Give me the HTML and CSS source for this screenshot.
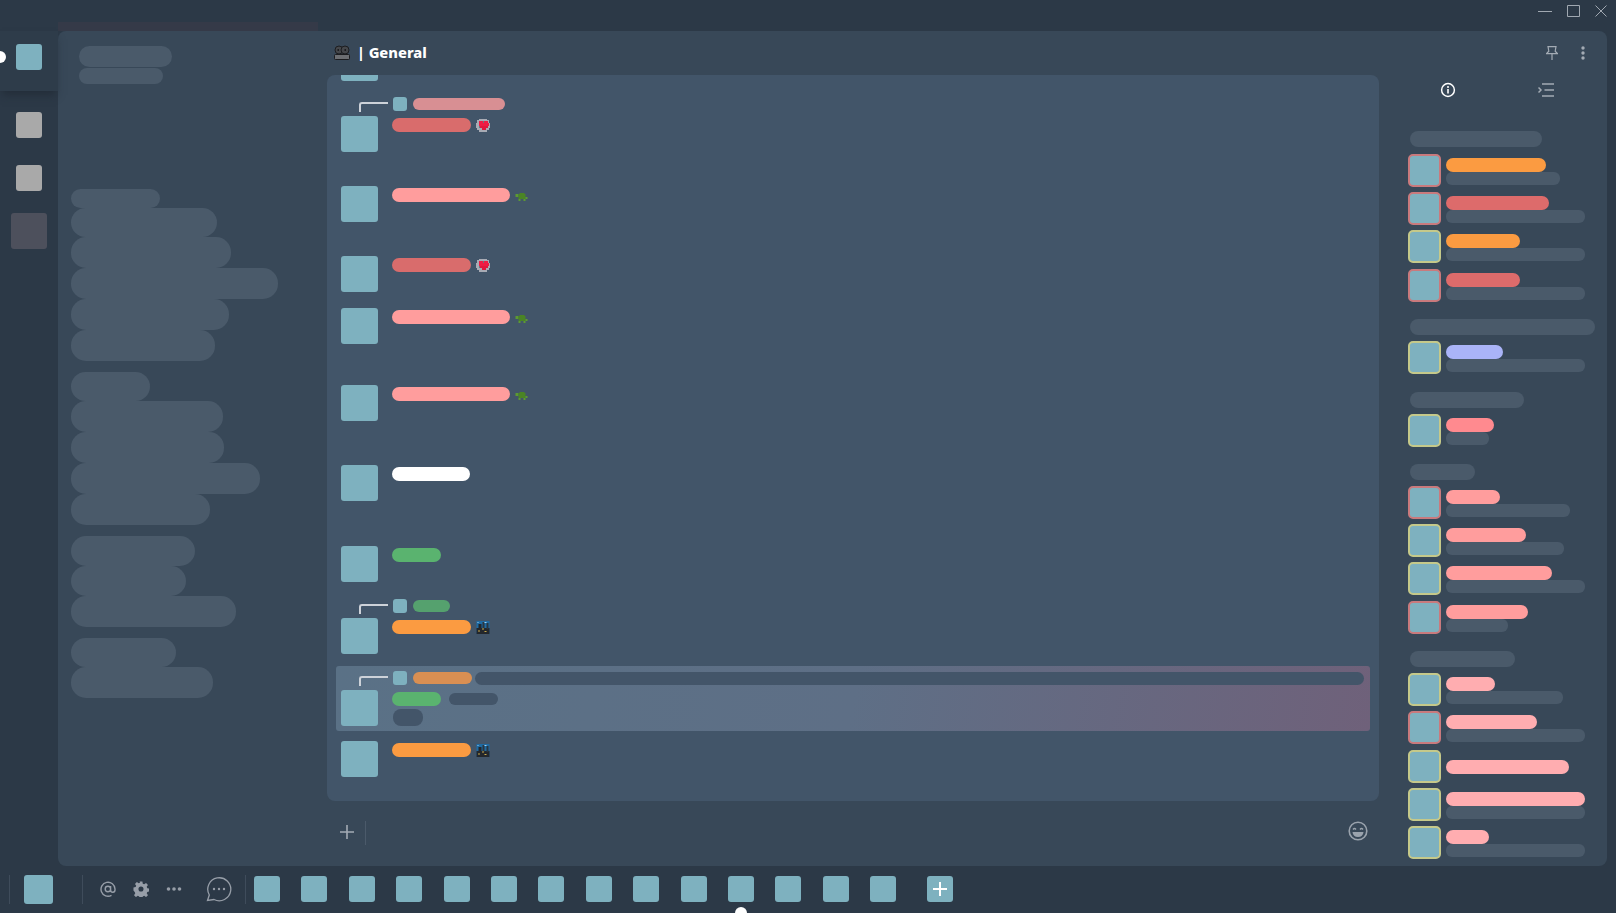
FILE: index.html
```html
<!DOCTYPE html>
<html lang="en">

<head>
  <meta charset="UTF-8">
  <title>General</title>
  <link rel="stylesheet" href="styles.css">
</head>

<body>
  <!-- little emoji used next to names -->
  <svg class="defs" width="0" height="0">
    <symbol id="heart" viewBox="0 0 14 13">
      <path d="M3 0h8v1h2v3h1v5h-1v2h-2v2H3v-2H1V9H0V4h1V1h2z" fill="#a8abb4" />
      <rect x="3" y="2" width="9" height="7" fill="#6f7480" />
      <rect x="3" y="2" width="4" height="2" fill="#ee1c45" />
      <rect x="8" y="2" width="4" height="2" fill="#ee1c45" />
      <rect x="3" y="4" width="10" height="3" fill="#ee1c45" />
      <rect x="4" y="7" width="8" height="2" fill="#e0183e" />
      <rect x="6" y="9" width="4" height="2" fill="#e0183e" />
    </symbol>
    <symbol id="turtle" viewBox="0 0 13 13">
      <rect x="0" y="5" width="3" height="3" fill="#5c9a32" />
      <rect x="3" y="5" width="7" height="5" fill="#4a8425" />
      <rect x="4" y="4" width="5" height="1" fill="#4a8425" />
      <rect x="10" y="8" width="2" height="2" fill="#5c9a32" />
      <rect x="3" y="10" width="2" height="2" fill="#5c9a32" />
      <rect x="8" y="10" width="2" height="2" fill="#5c9a32" />
    </symbol>
    <symbol id="city" viewBox="0 0 13 13">
      <rect x="0" y="0" width="13" height="13" fill="#1f6ba3" />
      <rect x="0" y="7" width="13" height="6" fill="#23272c" />
      <rect x="2" y="3" width="3" height="5" fill="#23272c" />
      <rect x="6" y="1" width="2" height="7" fill="#2b3640" />
      <rect x="10" y="2" width="2" height="6" fill="#2b3640" />
      <rect x="1" y="1" width="1" height="1" fill="#9fd0f0" />
      <rect x="8" y="1" width="2" height="1" fill="#9fd0f0" />
      <rect x="2" y="9" width="1" height="2" fill="#c9a94a" />
      <rect x="6" y="7" width="1" height="2" fill="#c9a94a" />
      <rect x="8" y="10" width="2" height="1" fill="#c9a94a" />
    </symbol>
  </svg>

  <div class="app">

    <div class="titlebar">
      <div class="strip"></div>
      <div class="winBtns">
        <svg width="14" height="12" viewBox="0 0 14 12"><path d="M0 6.5h14" /></svg>
        <svg width="13" height="12" viewBox="0 0 13 12"><path d="M.5.5h12v11H.5z" /></svg>
        <svg width="12" height="12" viewBox="0 0 12 12"><path d="M.5.5l11 11M11.5.5l-11 11" /></svg>
      </div>
    </div>

    <div class="rail">
      <div class="railTop">
        <span class="railPill"></span>
        <div class="railIcon teal"></div>
      </div>
      <div class="railIcon gray"></div>
      <div class="railIcon gray"></div>
      <div class="railActive"></div>
    </div>

    <div class="main">

      <div class="sidebar">
        <div class="sideHead">
          <div class="skel" style="width:93px;height:21px"></div>
          <div class="skel" style="width:84px;height:16px"></div>
        </div>
        <div class="chanGroup first">
          <div class="chan" style="width:89px;height:19px"></div>
          <div class="chan" style="width:146px;height:29px"></div>
          <div class="chan" style="width:160px;height:31px"></div>
          <div class="chan" style="width:207px;height:31px"></div>
          <div class="chan" style="width:158px;height:31px"></div>
          <div class="chan" style="width:144px;height:31px"></div>
        </div>
        <div class="chanGroup">
          <div class="chan" style="width:79px;height:29px"></div>
          <div class="chan" style="width:152px;height:31px"></div>
          <div class="chan" style="width:153px;height:31px"></div>
          <div class="chan" style="width:189px;height:31px"></div>
          <div class="chan" style="width:139px;height:31px"></div>
        </div>
        <div class="chanGroup">
          <div class="chan" style="width:124px;height:30px"></div>
          <div class="chan" style="width:115px;height:30px"></div>
          <div class="chan" style="width:165px;height:31px"></div>
        </div>
        <div class="chanGroup">
          <div class="chan" style="width:105px;height:29px"></div>
          <div class="chan" style="width:142px;height:31px"></div>
        </div>
      </div>

      <div class="center">
        <div class="chatHead">
          <svg class="headIcon" width="16" height="15" viewBox="0 0 16 15">
            <rect x=".5" y="9.500" width="15" height="5" rx="1" fill="#6c6e72" stroke="#1c1d20" />
            <circle cx="5" cy="5" r="4" fill="#45474b" stroke="#1c1d20" />
            <circle cx="11" cy="5" r="4" fill="#45474b" stroke="#1c1d20" />
            <rect x="3.500" y="4" width="1.500" height="2" fill="#1c1d20" />
            <rect x="10.500" y="4" width="1.500" height="2" fill="#1c1d20" />
          </svg>
          <span class="chatTitle">| General</span>
        </div>

        <div class="chat">
          <div class="stub"></div>

          <div class="msg m16">
            <div class="reply">
              <span class="hook"></span>
              <span class="replyAv"></span>
              <span class="replyName" style="width:92px;background:#d88f93"></span>
            </div>
            <div class="msgMain">
              <div class="avatar"></div>
              <div class="msgBody">
                <div class="nameRow">
                  <span class="name red" style="width:79px"></span>
                  <svg class="emoji"><use href="#heart" /></svg>
                </div>
              </div>
            </div>
          </div>

          <div class="msg m34">
            <div class="msgMain">
              <div class="avatar"></div>
              <div class="msgBody">
                <div class="nameRow">
                  <span class="name pink" style="width:118px"></span>
                  <svg class="emoji"><use href="#turtle" /></svg>
                </div>
              </div>
            </div>
          </div>

          <div class="msg m34">
            <div class="msgMain">
              <div class="avatar"></div>
              <div class="msgBody">
                <div class="nameRow">
                  <span class="name red" style="width:79px"></span>
                  <svg class="emoji"><use href="#heart" /></svg>
                </div>
              </div>
            </div>
          </div>

          <div class="msg m16">
            <div class="msgMain">
              <div class="avatar"></div>
              <div class="msgBody">
                <div class="nameRow">
                  <span class="name pink" style="width:118px"></span>
                  <svg class="emoji"><use href="#turtle" /></svg>
                </div>
              </div>
            </div>
          </div>

          <div class="msg m41">
            <div class="msgMain">
              <div class="avatar"></div>
              <div class="msgBody">
                <div class="nameRow">
                  <span class="name pink" style="width:118px"></span>
                  <svg class="emoji"><use href="#turtle" /></svg>
                </div>
              </div>
            </div>
          </div>

          <div class="msg m44">
            <div class="msgMain">
              <div class="avatar"></div>
              <div class="msgBody">
                <div class="nameRow">
                  <span class="name white" style="width:78px"></span>
                </div>
              </div>
            </div>
          </div>

          <div class="msg m45">
            <div class="msgMain">
              <div class="avatar"></div>
              <div class="msgBody">
                <div class="nameRow">
                  <span class="name green" style="width:49px"></span>
                </div>
              </div>
            </div>
          </div>

          <div class="msg m17">
            <div class="reply">
              <span class="hook"></span>
              <span class="replyAv"></span>
              <span class="replyName" style="width:37px;background:#55a16e"></span>
            </div>
            <div class="msgMain">
              <div class="avatar"></div>
              <div class="msgBody">
                <div class="nameRow">
                  <span class="name orange" style="width:79px"></span>
                  <svg class="emoji"><use href="#city" /></svg>
                </div>
              </div>
            </div>
          </div>

          <div class="msg mention">
            <div class="reply">
              <span class="hook"></span>
              <span class="replyAv"></span>
              <span class="replyName" style="width:59px;background:#d98f52"></span>
              <span class="replyText"></span>
            </div>
            <div class="msgMain">
              <div class="avatar"></div>
              <div class="msgBody">
                <div class="nameRow">
                  <span class="name green" style="width:49px"></span>
                  <span class="tag" style="width:49px"></span>
                </div>
                <div class="textBit" style="width:30px"></div>
              </div>
            </div>
          </div>

          <div class="msg m10">
            <div class="msgMain">
              <div class="avatar"></div>
              <div class="msgBody">
                <div class="nameRow">
                  <span class="name orange" style="width:79px"></span>
                  <svg class="emoji"><use href="#city" /></svg>
                </div>
              </div>
            </div>
          </div>
        </div>

        <div class="composer">
          <svg class="plus" width="14" height="14" viewBox="0 0 14 14"><path d="M7 0v14M0 7h14" /></svg>
          <span class="vline"></span>
          <svg class="smile" width="20" height="20" viewBox="0 0 20 20">
            <circle cx="10" cy="10" r="8.800" fill="none" stroke="#9aa3ad" stroke-width="1.600" />
            <path d="M5 8.500q1.500-2 3 0M12 8.500q1.500-2 3 0" fill="none" stroke="#9aa3ad" stroke-width="1.300" />
            <path d="M4.500 11h11q-.6 5-5.500 5t-5.500-5z" fill="#9aa3ad" />
          </svg>
        </div>
      </div>

      <div class="members">
        <div class="memTop">
          <svg class="pin" width="12" height="14" viewBox="0 0 12 14">
            <path d="M2 .6h8l-.8 4.600 2.200 2.400H.6l2.200-2.400zM6 7.600V14" />
          </svg>
          <svg class="dots" width="4" height="14" viewBox="0 0 4 14">
            <circle cx="2" cy="2" r="1.700" /><circle cx="2" cy="7" r="1.700" /><circle cx="2" cy="12" r="1.700" />
          </svg>
        </div>
        <div class="memTabs">
          <svg width="16" height="16" viewBox="0 0 16 16">
            <circle cx="8" cy="8" r="6.400" fill="none" stroke="#fff" stroke-width="1.500" />
            <path d="M8 7v4.500" stroke="#fff" stroke-width="1.600" />
            <circle cx="8" cy="4.900" r="1" fill="#fff" />
          </svg>
          <svg width="16" height="14" viewBox="0 0 16 14">
            <path d="M4 .9h12M6.500 7h9.500M4 13h12M.5 4.500L3 7 .5 9.500" fill="none" stroke="#a3abb4" stroke-width="1.500" />
          </svg>
        </div>

        <div class="group"><div class="groupName" style="width:132px"></div></div>
        <div class="member"><div class="memAv bRed"></div><div class="memText"><div class="memName" style="width:100px;background:#fb9b41"></div><div class="memSub" style="width:114px"></div></div></div>
        <div class="member"><div class="memAv bRed"></div><div class="memText"><div class="memName" style="width:103px;background:#dd6b6b"></div><div class="memSub" style="width:139px"></div></div></div>
        <div class="member"><div class="memAv bYel"></div><div class="memText"><div class="memName" style="width:74px;background:#fb9b41"></div><div class="memSub" style="width:139px"></div></div></div>
        <div class="member"><div class="memAv bRed"></div><div class="memText"><div class="memName" style="width:74px;background:#dd6b6b"></div><div class="memSub" style="width:139px"></div></div></div>

        <div class="group"><div class="groupName" style="width:185px"></div></div>
        <div class="member"><div class="memAv bYel"></div><div class="memText"><div class="memName" style="width:57px;background:#aab4f8"></div><div class="memSub" style="width:139px"></div></div></div>

        <div class="group"><div class="groupName" style="width:114px"></div></div>
        <div class="member"><div class="memAv bYel"></div><div class="memText"><div class="memName" style="width:48px;background:#ff8a8f"></div><div class="memSub" style="width:43px"></div></div></div>

        <div class="group"><div class="groupName" style="width:65px"></div></div>
        <div class="member"><div class="memAv bRed"></div><div class="memText"><div class="memName" style="width:54px;background:#ff9d9d"></div><div class="memSub" style="width:124px"></div></div></div>
        <div class="member"><div class="memAv bYel"></div><div class="memText"><div class="memName" style="width:80px;background:#ff9d9d"></div><div class="memSub" style="width:118px"></div></div></div>
        <div class="member"><div class="memAv bYel"></div><div class="memText"><div class="memName" style="width:106px;background:#ff9d9d"></div><div class="memSub" style="width:139px"></div></div></div>
        <div class="member"><div class="memAv bRed"></div><div class="memText"><div class="memName" style="width:82px;background:#ff9d9d"></div><div class="memSub" style="width:62px"></div></div></div>

        <div class="group"><div class="groupName" style="width:105px"></div></div>
        <div class="member"><div class="memAv bYel"></div><div class="memText"><div class="memName" style="width:49px"></div><div class="memSub" style="width:117px"></div></div></div>
        <div class="member"><div class="memAv bRed"></div><div class="memText"><div class="memName" style="width:91px"></div><div class="memSub" style="width:139px"></div></div></div>
        <div class="member"><div class="memAv bYel"></div><div class="memText single"><div class="memName" style="width:123px"></div></div></div>
        <div class="member"><div class="memAv bYel"></div><div class="memText"><div class="memName" style="width:139px"></div><div class="memSub" style="width:139px"></div></div></div>
        <div class="member"><div class="memAv bYel"></div><div class="memText"><div class="memName" style="width:43px"></div><div class="memSub" style="width:139px"></div></div></div>
      </div>
    </div>

    <div class="dock">
      <span class="dockSep"></span>
      <div class="dockMe"></div>
      <span class="dockSep sep2"></span>
      <svg class="dockIcon" width="16" height="16" viewBox="0 0 16 16">
        <path d="M11.500 14.300A7 7 0 1 1 15 8v1a2.200 2.200 0 0 1-4.400 0V5M10.600 8a2.700 2.700 0 1 1-5.400 0 2.700 2.700 0 0 1 5.400 0z" fill="none" stroke="#979ea8" stroke-width="1.400" />
      </svg>
      <svg class="dockIcon gear" width="16" height="16" viewBox="0 0 16 16">
        <path fill-rule="evenodd" d="M6.500 0h3l.4 2.300 1.500.7 2-1.300 2 2.100-1.300 1.900.6 1.500 2.300.5v3l-2.300.4-.6 1.500 1.300 2-2 2-2-1.300-1.500.6-.4 2.300h-3l-.4-2.300-1.500-.6-2 1.300-2-2 1.300-2-.6-1.500L0 9.500v-3l2.300-.5.600-1.500-1.300-1.900 2-2.100 2 1.300 1.500-.7zM8 5.300a2.700 2.700 0 1 0 0 5.400 2.700 2.700 0 0 0 0-5.400z" fill="#979ea8" transform="scale(.94) translate(.5 .5)" />
      </svg>
      <svg class="dockIcon dotsH" width="16" height="16" viewBox="0 0 16 16">
        <circle cx="2.500" cy="8" r="1.800" fill="#979ea8" /><circle cx="8" cy="8" r="1.800" fill="#979ea8" /><circle cx="13.500" cy="8" r="1.800" fill="#979ea8" />
      </svg>
      <svg class="dockIcon bubble" width="26" height="26" viewBox="0 0 26 26">
        <path d="M1.500 24.500l1.800-5.500A11.500 11.500 0 1 1 8 23.500z" fill="none" stroke="#979ea8" stroke-width="1.300" />
        <circle cx="8" cy="13" r="1.200" fill="#979ea8" /><circle cx="13" cy="13" r="1.200" fill="#979ea8" /><circle cx="18" cy="13" r="1.200" fill="#979ea8" />
      </svg>
      <span class="dockSep sep3"></span>
      <div class="dockList">
        <div class="dockItem"></div>
        <div class="dockItem"></div>
        <div class="dockItem"></div>
        <div class="dockItem"></div>
        <div class="dockItem"></div>
        <div class="dockItem"></div>
        <div class="dockItem"></div>
        <div class="dockItem"></div>
        <div class="dockItem"></div>
        <div class="dockItem"></div>
        <div class="dockItem current"><span class="dockPill"></span></div>
        <div class="dockItem"></div>
        <div class="dockItem"></div>
        <div class="dockItem"></div>
      </div>
      <div class="dockAdd">
        <svg width="14" height="14" viewBox="0 0 14 14"><path d="M7 0v14M0 7h14" stroke="#fff" stroke-width="2" /></svg>
      </div>
    </div>

  </div>
</body>
</html>
```

FILE: styles.css
```css
body {
  margin: 0;
  background: #2c3947;
  overflow: hidden;
}

.defs {
  position: absolute;
}

.app {
  width: 1616px;
  height: 913px;
  display: grid;
  grid-template-columns: 58px 1fr;
  grid-template-rows: 31px 835px 47px;
  overflow: hidden;
}

/* top bar */
.titlebar {
  grid-column: 1 / 3;
  display: flex;
  justify-content: space-between;
  padding-left: 58px;
}

.strip {
  width: 260px;
  height: 9px;
  margin-top: 22px;
  background: #353a48;
}

.winBtns {
  display: flex;
  gap: 15px;
  padding: 5px 9px 0 0;
}

.winBtns svg {
  fill: none;
  stroke: #a0a8b1;
  stroke-width: 1;
}

/* servers */
.rail {
  display: flex;
  flex-direction: column;
  align-items: center;
}

.railTop {
  width: 100%;
  height: 60px;
  display: flex;
  justify-content: center;
  padding-top: 13px;
  box-sizing: border-box;
  background: #2e3c4a;
  box-shadow: 0 6px 8px -2px rgba(30, 38, 48, .6);
  position: relative;
  margin-bottom: 21px;
}

.railPill {
  position: absolute;
  left: -6px;
  top: 20px;
  width: 12px;
  height: 12px;
  border-radius: 50%;
  background: #fff;
}

.railIcon {
  width: 26px;
  height: 26px;
  border-radius: 3px;
}

.teal {
  background: #7eb1bf;
}

.gray {
  background: #a9a9a9;
  margin-bottom: 27px;
}

.railActive {
  width: 36px;
  height: 36px;
  margin-top: -5px;
  border-radius: 3px;
  background: #4d505c;
}

/* main panel */
.main {
  display: flex;
  width: 1549px;
  background: #384858;
  border-radius: 8px;
  overflow: hidden;
}

.sidebar {
  width: 269px;
  flex: none;
}

.sideHead {
  padding: 15px 0 0 21px;
}

.skel {
  background: #4a5a6a;
  border-radius: 11px;
  margin-bottom: 1px;
}

.chanGroup {
  padding-left: 13px;
  margin-top: 11px;
}

.chanGroup.first {
  margin-top: 105px;
}

.chan {
  background: #4a5a6a;
  border-radius: 15px;
}

.center {
  width: 1052px;
  flex: none;
  display: flex;
  flex-direction: column;
}

.chatHead {
  height: 42px;
  margin-bottom: 2px;
  flex: none;
  display: flex;
  align-items: center;
  padding-left: 7px;
  box-sizing: border-box;
}

.headIcon {
  margin-right: 7px;
}

.chatTitle {
  font-family: "Noto Sans", sans-serif;
  font-weight: 800;
  font-size: 14.700px;
  color: #fff;
}

/* messages */
.chat {
  height: 726px;
  flex: none;
  background: #425569;
  border-radius: 8px;
  overflow: hidden;
}

.stub {
  width: 37px;
  height: 6px;
  margin-left: 14px;
  background: #7eb1bf;
  border-radius: 0 0 3px 3px;
}

.msg {
  margin: 0 9px;
  padding: 0 5px;
}

.m10 { margin-top: 10px; }
.m16 { margin-top: 16px; }
.m17 { margin-top: 17px; }
.m34 { margin-top: 34px; }
.m41 { margin-top: 41px; }
.m44 { margin-top: 44px; }
.m45 { margin-top: 45px; }

.mention {
  margin-top: 12px;
  padding: 5px;
  border-radius: 3px;
  background: linear-gradient(100deg, #5a7186 0%, #5e6f86 50%, #6f617a 100%);
}

.reply {
  display: flex;
  align-items: center;
  height: 14px;
  margin-bottom: 5px;
}

.hook {
  width: 29px;
  height: 10px;
  margin: 5px 0 0 18px;
  border-top: 2px solid #cdd2d9;
  border-left: 2px solid #cdd2d9;
  border-top-left-radius: 3px;
  box-sizing: border-box;
  align-self: flex-start;
}

.replyAv {
  width: 14px;
  height: 14px;
  margin-left: 5px;
  border-radius: 3px;
  background: #7eb1bf;
}

.replyName {
  height: 12px;
  margin-left: 6px;
  border-radius: 6px;
}

.replyText {
  flex: 1;
  height: 13px;
  margin-left: 3px;
  margin-right: 1px;
  border-radius: 7px;
  background: #435569;
}

.msgMain {
  display: flex;
}

.avatar {
  width: 37px;
  height: 36px;
  flex: none;
  border-radius: 3px;
  background: #7eb1bf;
}

.msgBody {
  padding: 2px 0 0 14px;
}

.nameRow {
  display: flex;
  gap: 5px;
  align-items: center;
}

.name {
  height: 14px;
  border-radius: 7px;
}

.red { background: #d96c6c; }
.pink { background: #ff9d9d; }
.white { background: #fff; }
.green { background: #5ab36f; }
.orange { background: #fb9b41; }

.emoji {
  width: 14px;
  height: 13px;
}

.tag {
  height: 12px;
  margin-left: 3px;
  border-radius: 6px;
  background: #435569;
}

.textBit {
  height: 17px;
  margin: 3px 0 0 1px;
  border-radius: 8px;
  background: #435569;
}

.composer {
  flex: 1;
  display: flex;
  align-items: center;
  padding: 0 11px 5px 13px;
}

.plus {
  fill: none;
  stroke: #a3abb4;
  stroke-width: 1.600;
  margin-top: 2px;
}

.vline {
  width: 1px;
  height: 24px;
  margin: 3px 0 0 11px;
  background: #4b5a6a;
}

.smile {
  margin: 0 0 0 auto;
}

/* member list */
.members {
  flex: 1;
  min-width: 0;
  padding-left: 29px;
}

.memTop {
  height: 44px;
  display: flex;
  justify-content: flex-end;
  align-items: center;
  gap: 23px;
  padding-right: 22px;
}

.pin {
  fill: none;
  stroke: #a3abb4;
  stroke-width: 1.200;
}

.dots {
  fill: #a3abb4;
}

.memTabs {
  display: flex;
  justify-content: space-between;
  align-items: center;
  height: 29px;
  margin-bottom: 27px;
  padding: 0 53px 0 32px;
}

.group {
  padding: 0 0 6px 2px;
  margin-top: 17.500px;
}

.memTabs + .group {
  margin-top: 0;
  padding-bottom: 7px;
}

.groupName {
  height: 16px;
  border-radius: 8px;
  background: #4a5a6a;
}

.member {
  display: flex;
  gap: 5px;
  height: 33px;
  margin-bottom: 5.200px;
}

.member:has(+ .group) {
  margin-bottom: 0;
}

.memAv {
  width: 33px;
  height: 33px;
  flex: none;
  box-sizing: border-box;
  border: 2px solid;
  border-radius: 5px;
  background: #7eb1bf;
}

.bRed { border-color: #c97a7d; }
.bYel { border-color: #c5c98a; }

.memText {
  padding-top: 4px;
}

.memText.single {
  padding-top: 10px;
}

.memName {
  height: 14px;
  border-radius: 7px;
  background: #ffadb0;
}

.memSub {
  height: 13px;
  border-radius: 6px;
  background: #4a5a6a;
}

/* bottom bar */
.dock {
  grid-column: 1 / 3;
  display: flex;
  align-items: center;
  padding: 0 0 1px 9px;
}

.dockSep {
  width: 1px;
  height: 29px;
  background: #3f4c5b;
}

.dockMe {
  width: 29px;
  height: 29px;
  margin-left: 14px;
  border-radius: 3px;
  background: #7eb1bf;
}

.sep2 {
  margin-left: 29px;
}

.dockIcon {
  margin-left: 17px;
  flex: none;
}

.bubble {
  margin-left: 24px;
}

.sep3 {
  margin-left: 13px;
}

.dockList {
  display: flex;
  gap: 21.400px;
  margin-left: 8px;
}

.dockItem {
  width: 26px;
  height: 26px;
  border-radius: 3px;
  background: #7eb1bf;
  position: relative;
}

.dockPill {
  position: absolute;
  left: 7px;
  top: 31px;
  width: 12px;
  height: 12px;
  border-radius: 50%;
  background: #fff;
}

.dockAdd {
  width: 26px;
  height: 26px;
  margin-left: 31px;
  border-radius: 3px;
  background: #7eb1bf;
  display: flex;
  align-items: center;
  justify-content: center;
}
```
